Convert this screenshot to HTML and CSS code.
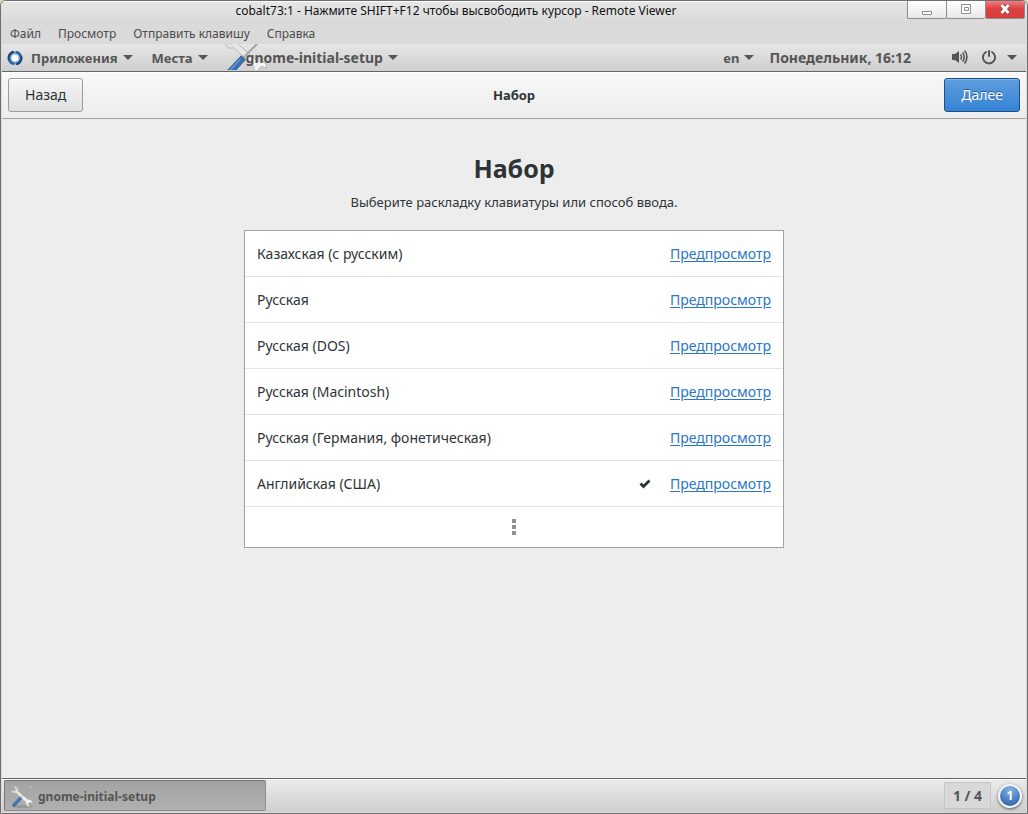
FILE: index.html
```html
<!DOCTYPE html>
<html lang="ru">
<head>
<meta charset="utf-8">
<title>cobalt73:1 - Remote Viewer</title>
<link rel="stylesheet" href="styles.css">
</head>
<body>
<svg class="defs" width="0" height="0" aria-hidden="true">
  <defs>
    <linearGradient id="steel" x1="0" y1="0" x2="1" y2="1">
      <stop offset="0" stop-color="#dcdcda"/><stop offset="1" stop-color="#fafafa"/>
    </linearGradient>
    <symbol id="tools" viewBox="0 0 24 24">
      <ellipse cx="13" cy="21.500" rx="10" ry="1.800" fill="#000" opacity=".12"/>
      <path d="M3.600 1.500 6 4.500 4.800 6 1.700 5.400C1.800 7.500 3.700 8.600 6 7.900L16 17.200c-.4 2.600 1.300 4.600 3.900 4.200L18 19.200l1.400-1.900 2.900.6c.1-2.500-2-3.900-4.500-3.300L8 6C8.500 3.200 6.500 1.100 3.600 1.500Z" fill="url(#steel)" stroke="#b6b6b4" stroke-width=".5"/>
      <path d="M21.500 2 10.500 13" stroke="#a4a4a4" stroke-width="1"/>
      <path d="m20.800 2.800 1.400-1.400" stroke="#bbb" stroke-width="1.800"/>
      <path d="M9.600 11.900 11.700 13.900 5 21.200c-1.200 1.300-3.500-.6-2.300-2Z" fill="#3b6eb0" stroke="#2f5c9a" stroke-width=".4"/>
      <path d="m9.200 13.500-5.200 5.700" stroke="#6d97cd" stroke-width=".7"/>
    </symbol>
  </defs>
</svg>
<div class="window">
  <header class="titlebar">
    <div class="window-title">cobalt73:1 - Нажмите SHIFT+F12 чтобы высвободить курсор - Remote Viewer</div>
    <div class="window-buttons">
      <button class="window-button" aria-label="Свернуть"><svg width="12" height="12" viewBox="0 0 12 12"><path d="M1.500 7.500h9v3h-9z" fill="#fff" stroke="#8c8c8c"/></svg></button>
      <button class="window-button" aria-label="Развернуть"><svg width="12" height="12" viewBox="0 0 12 12"><path d="M1.500 .5h9v9h-9zM4.500 3.500h4v3h-4z" fill="#fff" stroke="#8c8c8c"/></svg></button>
      <button class="window-button close" aria-label="Закрыть"><svg width="12" height="12" viewBox="0 0 12 12"><path d="m2.500 1 7 8m0-8-7 8" stroke="#a82a2c" stroke-width="4.500"/><path d="m2.500 1 7 8m0-8-7 8" stroke="#fff" stroke-width="3"/></svg></button>
    </div>
  </header>
  <nav class="menubar">
    <button>Файл</button><button>Просмотр</button><button>Отправить клавишу</button><button>Справка</button>
  </nav>
  <div class="desktop">
    <div class="top-panel">
      <button class="panel-item apps">
        <svg width="16" height="16" viewBox="0 0 16 16"><circle cx="8" cy="8" r="7.300" fill="#2a5f9b"/><path d="M1.500 10A7 7 0 0 1 6 1.500M14.500 6A7 7 0 0 1 10 14.500" stroke="#16406f" stroke-width="1.400" fill="none"/><path d="M8 0v2.500M8 13.500V16" stroke="#d5e0ee" stroke-width="1.400"/><circle cx="8" cy="8" r="4.700" fill="#a9c6e8"/><circle cx="8" cy="8" r="3.200" fill="#fff"/></svg>
        <span>Приложения</span><i class="arrow"></i>
      </button>
      <button class="panel-item places"><span>Места</span><i class="arrow"></i></button>
      <button class="panel-item current-app"><svg class="app-icon" width="48" height="26" viewBox="0 0 48 26"><use href="#tools" x="0" y="-12" width="48" height="48"/></svg><span>gnome-initial-setup</span><i class="arrow"></i></button>
      <div class="status">
        <button class="panel-item lang"><span>en</span><i class="arrow"></i></button>
        <button class="panel-item clock">Понедельник, 16:12</button>
        <button class="panel-item system" aria-label="Система">
          <svg width="16" height="16" viewBox="0 0 16 16" fill="none" stroke="#555" stroke-width="1.600"><path d="M0 4h3l4-3v12l-4-3H0z" fill="#555" stroke="none"/><path d="M8.500 4.500c1.200 1.300 1.200 3.700 0 5M10.500 2.500c2.300 2.300 2.300 6.700 0 9M12.500 .5c3.200 3.200 3.200 9.800 0 13"/></svg>
          <svg width="16" height="16" viewBox="0 0 16 16" fill="none" stroke="#555" stroke-width="2" stroke-linecap="round"><path d="M5 2a6.100 6.100 0 1 0 6 0M8 1v5"/></svg>
          <i class="arrow"></i>
        </button>
      </div>
    </div>
    <div class="headerbar">
      <button class="button">Назад</button>
      <div class="header-title">Набор</div>
      <button class="button suggested">Далее</button>
    </div>
    <main class="content">
      <h1>Набор</h1>
      <p>Выберите раскладку клавиатуры или способ ввода.</p>
      <ul class="layouts">
        <li><span>Казахская (с русским)</span><a href="#preview">Предпросмотр</a></li>
        <li><span>Русская</span><a href="#preview">Предпросмотр</a></li>
        <li><span>Русская (DOS)</span><a href="#preview">Предпросмотр</a></li>
        <li><span>Русская (Macintosh)</span><a href="#preview">Предпросмотр</a></li>
        <li><span>Русская (Германия, фонетическая)</span><a href="#preview">Предпросмотр</a></li>
        <li><span>Английская (США)</span><svg class="check" width="12" height="12" viewBox="0 0 12 12"><path d="m1.500 5.500 3 3 6-6" fill="none" stroke="#2e3436" stroke-width="2.800"/></svg><a href="#preview">Предпросмотр</a></li>
        <li class="more"><button aria-label="Ещё"><svg width="4" height="16" viewBox="0 0 4 16"><path d="M0 0h4v4H0zM0 6h4v4H0zM0 12h4v4H0z" fill="#8e9192"/></svg></button></li>
      </ul>
    </main>
    <footer class="bottom-panel">
      <button class="task"><svg width="24" height="24"><use href="#tools"/></svg><span>gnome-initial-setup</span></button>
      <button class="workspace">1 / 4</button>
      <button class="notifications">1</button>
    </footer>
  </div>
</div>
</body>
</html>
```
FILE: styles.css
```css
* { box-sizing: border-box; }

body {
  margin: 0;
  background: #dcdcc4;
  color: #2e3436;
  font: 13px/20px "Noto Sans", sans-serif;
}

button {
  margin: 0;
  padding: 0;
  border: 0;
  background: none;
  color: inherit;
  font: inherit;
}

svg { display: block; flex: none; }
.defs { position: absolute; }

.window {
  display: flex;
  flex-direction: column;
  min-height: 100vh;
  border: 1px solid #6d6d6d;
  border-radius: 6px 6px 0 0;
  background: #dadada;
  overflow: hidden;
}

.titlebar {
  display: flex;
  height: 20px;
  border-top: 1px solid #fff;
  background: linear-gradient(#e6e6e6, #dadada);
  color: #111;
  font-size: 12px;
}

.window-title { flex: 1; padding-left: 4px; text-align: center; line-height: 18px; }

.window-buttons { display: flex; margin: -2px 2px 0 0; }

.window-button {
  display: flex;
  align-items: center;
  justify-content: center;
  width: 39px;
  height: 19px;
  border: 1px solid #8c8c8c;
  border-right-width: 0;
  border-radius: 0 0 2px 2px;
  background: linear-gradient(#fff, #e9e9e9);
}

.window-button.close { width: 40px; border-right-width: 1px; background: linear-gradient(#ed8283, #dd4042 45%, #da3d3f); }

.menubar {
  display: flex;
  gap: 17px;
  height: 23px;
  padding: 2px 9px 0;
  color: #4c4c4c;
  font-size: 12px;
}

.desktop {
  display: flex;
  flex: 1;
  flex-direction: column;
  margin: 0 1px 1px;
  background: #ededed;
  font-size: 14px;
}

.top-panel {
  display: flex;
  height: 28px;
  border-bottom: 1px solid #666;
  background: linear-gradient(#e6e6e6, #cecece);
  color: #555;
  font-size: 13px;
  font-weight: 700;
  text-shadow: 0 1px #f4f4f4;
}

.panel-item { display: flex; align-items: center; gap: 5px; }
.apps { padding-left: 5px; }
.apps span { padding-left: 3px; }
.places { padding-left: 19px; }

.arrow {
  border: 5px solid transparent;
  border-top-color: #555;
  border-bottom-width: 0;
}

.current-app { position: relative; padding-left: 38px; font-size: 14px; }
.current-app span { position: relative; }
.app-icon { position: absolute; left: 14px; top: 0; }

.status { display: flex; margin-left: auto; }
.clock { padding-left: 15px; font-size: 14px; }
.system { gap: 13px; padding: 0 9px 0 41px; }
.system .arrow { margin-left: -3px; }

.headerbar {
  display: grid;
  grid-template-columns: 1fr auto 1fr;
  align-items: center;
  height: 47px;
  padding: 0 6px 1px;
  border-top: 1px solid #fff;
  border-bottom: 1px solid #a1a1a1;
  background: linear-gradient(#f8f8f8, #ededed);
}

.header-title { font-size: 13px; font-weight: 700; }

.button {
  justify-self: start;
  height: 34px;
  padding: 0 16px;
  border: 1px solid #9b9b9b;
  border-radius: 3px;
  background: linear-gradient(#f6f6f6, #e0e0e0);
  box-shadow: inset 0 1px #fff;
}

.suggested {
  justify-self: end;
  border-color: #1c5187;
  background: linear-gradient(#5f9ddd, #3583d5);
  box-shadow: inset 0 1px #82b3e6;
  color: #fff;
  text-shadow: 0 -1px #1d5d9f;
}

.content {
  display: flex;
  flex: 1;
  flex-direction: column;
  align-items: center;
  padding: 32px 12px;
}

h1 { margin: 0; font-size: 25px; line-height: 34px; }
.content p { margin: 7px 0 18px; font-size: 13px; }

.layouts {
  width: 100%;
  max-width: 540px;
  margin: 0;
  padding: 0;
  border: 1px solid #a1a1a1;
  background: #fff;
  list-style: none;
}

.layouts li {
  display: flex;
  align-items: center;
  height: 46px;
  padding: 0 12px;
  border-bottom: 1px solid #e3e3e3;
}

.layouts li span { flex: 1; }
.layouts a { color: #2a76c6; text-underline-offset: 2px; }
.check { margin-right: 19px; }
.layouts .more { justify-content: center; height: 40px; border: 0; }

.bottom-panel {
  display: flex;
  align-items: center;
  height: 34px;
  padding: 0 4px 0 2px;
  border-top: 1px solid #666;
  background: linear-gradient(#ececec, #cecece);
  color: #555;
  font-weight: 700;
  box-shadow: inset 0 1px #f8f8f8;
}

.task {
  display: flex;
  align-items: center;
  gap: 4px;
  width: 262px;
  height: 31px;
  padding: 2px 0 0 5px;
  border: 1px solid #8e8e8e;
  border-top-color: #777;
  border-left-color: #777;
  border-radius: 2px;
  background: linear-gradient(#a3a3a3, #b0b0b0);
  font-size: 12px;
}

.workspace {
  width: 47px;
  height: 27px;
  margin: 0 7px 0 auto;
  border: 1px solid #c6c6c6;
  background: #d8d8d8;
}

.notifications {
  width: 24px;
  height: 24px;
  border: 2px solid #f4f4f4;
  border-radius: 50%;
  background: radial-gradient(circle at 50% 20%, #83b4e8, #3164ad 85%);
  box-shadow: 0 1px 3px #555;
  color: #fff;
  font-size: 12px;
  line-height: 20px;
}
```
